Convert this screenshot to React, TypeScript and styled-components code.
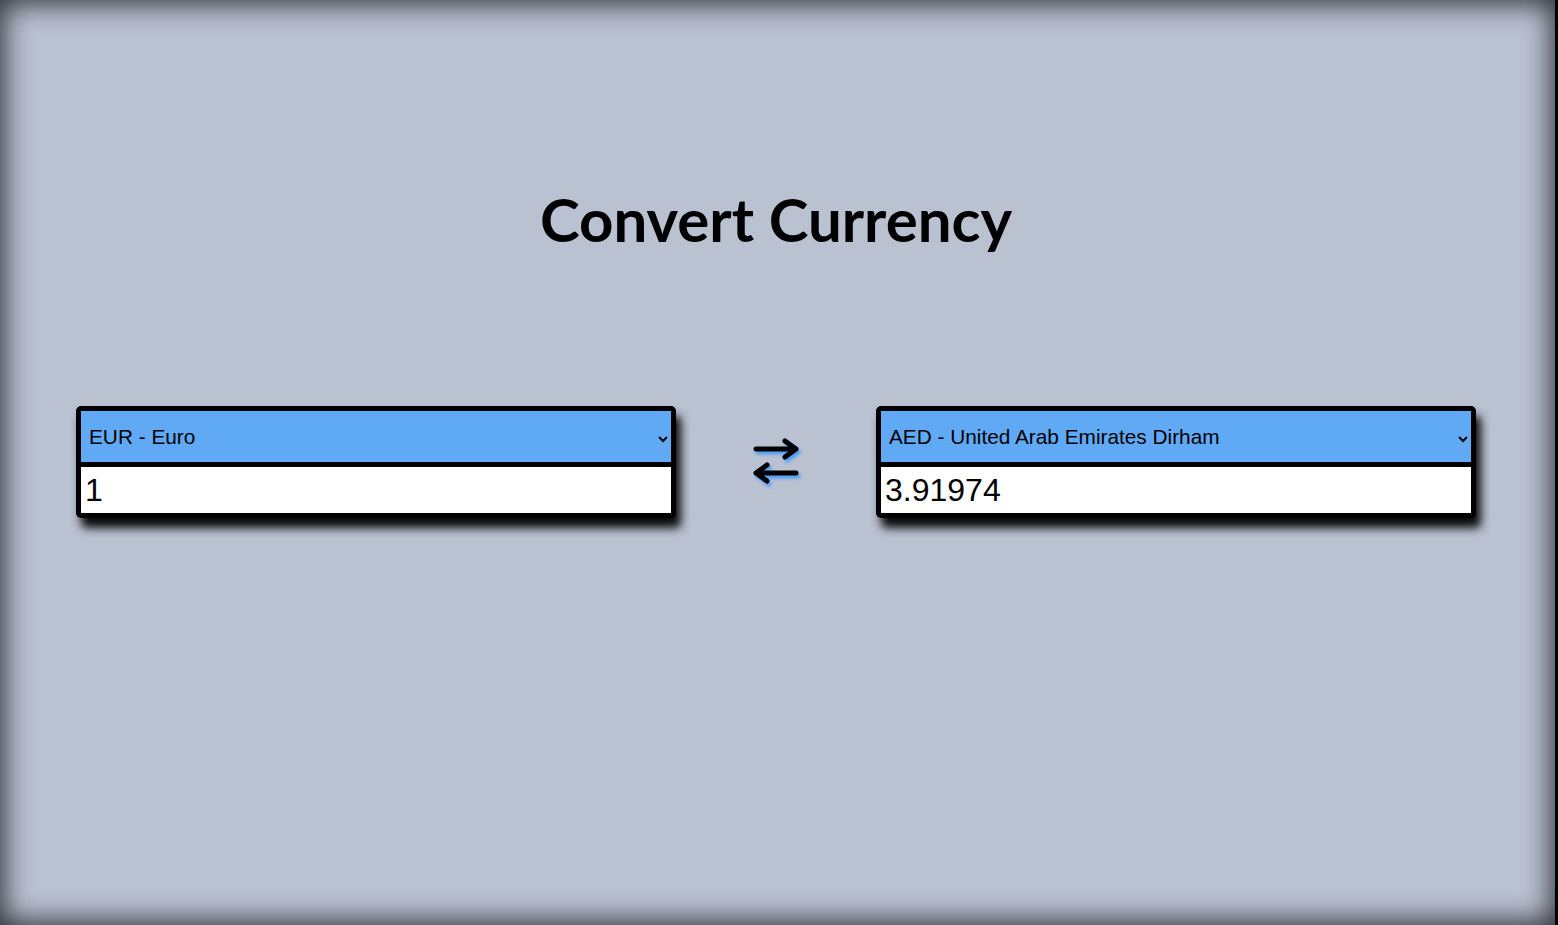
import { useState } from 'react';
import { styled, createGlobalStyle } from 'styled-components';

const GlobalStyle = createGlobalStyle`
  html, body {
    margin: 0;
    padding: 0;
    background: #000;
    overflow: hidden;
  }
`;

const currencies = [
  { code: 'EUR', name: 'Euro' },
  { code: 'AED', name: 'United Arab Emirates Dirham' },
  { code: 'USD', name: 'United States Dollar' },
  { code: 'GBP', name: 'British Pound Sterling' },
];

const rates: Record<string, number> = { EUR: 1, AED: 3.91974, USD: 1.0672, GBP: 0.8571 };

function CurrencyBox({
  code,
  amount,
  onCode,
  onAmount,
}: {
  code: string;
  amount: string;
  onCode: (c: string) => void;
  onAmount: (a: string) => void;
}) {
  return (
    <Card>
      <Select value={code} onChange={(e) => onCode(e.target.value)}>
        {currencies.map((c) => (
          <option key={c.code} value={c.code}>
            {c.code} - {c.name}
          </option>
        ))}
      </Select>
      <Amount value={amount} onChange={(e) => onAmount(e.target.value)} />
    </Card>
  );
}

function SwapIcon() {
  return (
    <SwapSvg width="48" height="52" viewBox="0 0 48 52" fill="none">
      <g stroke="#000" strokeWidth="5" strokeLinecap="round" strokeLinejoin="round">
        <path d="M4 13H44M33 5L44 13L33 21" />
        <path d="M44 37H4M15 29L4 37L15 45" />
      </g>
    </SwapSvg>
  );
}

export default function App() {
  const [from, setFrom] = useState('EUR');
  const [to, setTo] = useState('AED');
  const [amount, setAmount] = useState('1');

  const converted = (() => {
    const n = parseFloat(amount);
    if (isNaN(n)) return '';
    return String(+((n / rates[from]) * rates[to]).toFixed(5));
  })();

  return (
    <>
      <GlobalStyle />
      <Page>
        <Title>Convert Currency</Title>
        <Row>
          <CurrencyBox code={from} amount={amount} onCode={setFrom} onAmount={setAmount} />
          <SwapButton
            onClick={() => {
              setFrom(to);
              setTo(from);
            }}
          >
            <SwapIcon />
          </SwapButton>
          <CurrencyBox code={to} amount={converted} onCode={setTo} onAmount={() => {}} />
        </Row>
      </Page>
    </>
  );
}

const Page = styled.div`
  width: 1555px;
  height: 925px;
  background: #bac1d1;
  box-shadow: inset 0 0 28px 4px rgba(0, 0, 0, 0.75);
  display: flex;
  flex-direction: column;
  align-items: center;
  box-sizing: border-box;
  padding: 183px 3px 0 0;
`;

const Title = styled.h1`
  margin: 0;
  font-family: Lato, 'Noto Sans', sans-serif;
  font-weight: 700;
  font-size: 60px;
  line-height: 72px;
  color: #000;
`;

const Row = styled.div`
  margin-top: 151px;
  display: flex;
  align-items: center;
`;

const Card = styled.div`
  width: 600px;
  box-sizing: border-box;
  border: 5px solid #000;
  border-radius: 5px;
  background: #fff;
  display: flex;
  flex-direction: column;
  box-shadow: 5px 10px 10px rgba(0, 0, 0, 0.95);
  overflow: hidden;
`;

const Select = styled.select`
  height: 56px;
  box-sizing: border-box;
  border: none;
  border-bottom: 5px solid #000;
  border-radius: 0;
  background: #60a9f4;
  font-family: 'Liberation Sans', Arial, sans-serif;
  font-size: 20.8px;
  color: #000;
  padding: 0 6px 0 4px;
  outline: none;
`;

const Amount = styled.input`
  height: 46px;
  box-sizing: border-box;
  border: none;
  outline: none;
  padding: 0 4px;
  font-family: 'Liberation Sans', Arial, sans-serif;
  font-size: 32px;
  color: #000;
  background: #fff;
`;

const SwapButton = styled.button`
  width: 200px;
  display: flex;
  justify-content: center;
  background: none;
  border: none;
  padding: 0;
  cursor: pointer;
`;

const SwapSvg = styled.svg`
  display: block;
  filter: drop-shadow(2px 3px 1.5px #4aa0f7);
`;
